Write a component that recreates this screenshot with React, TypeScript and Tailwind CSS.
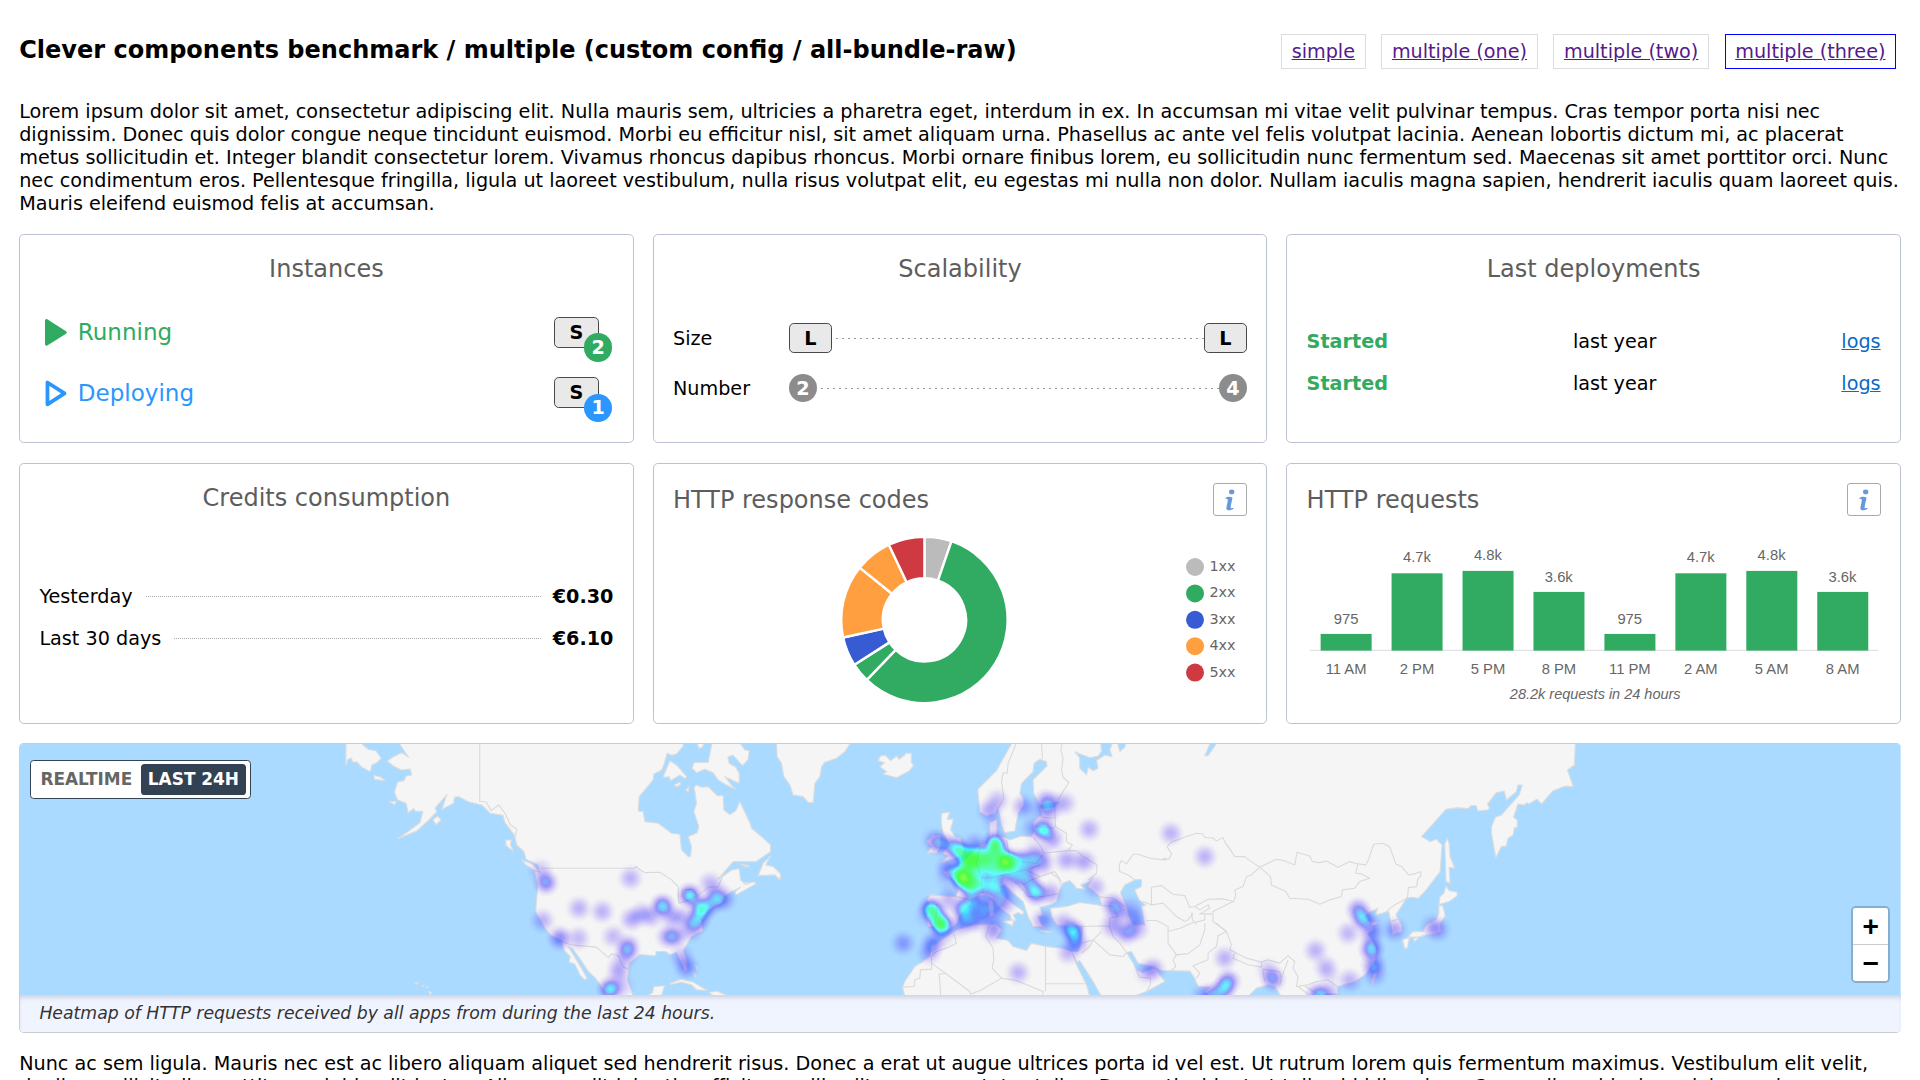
import React from "react";

/* ---------- World map ---------- */

type Frame = { x: number; y: number; sx: number; sy: number };

// Map sheets: each one has its own origin and scale inside the map.
const W: Frame = { x: 0, y: 730, sx: 1 / 2.3758, sy: 1 / 3 };
const A: Frame = { x: 500, y: 730, sx: 1 / 3, sy: 1 / 3 };
const E: Frame = { x: 880, y: 730, sx: 1 / 3, sy: 1 / 3 };
const P: Frame = { x: 1300, y: 730, sx: 1 / 2.529, sy: 1 / 3 };

const pts = (f: Frame, s: string) =>
  s
    .trim()
    .split(/\s+/)
    .map((p) => {
      const [x, y] = p.split(",").map(Number);
      return `${(f.x + x * f.sx).toFixed(1)},${(f.y + y * f.sy).toFixed(1)}`;
    })
    .join(" ");

const americas =
  pts(
    W,
    "948,38 962,66 971,82 955,68 935,80 920,93 935,108 953,120 975,117 978,135 965,138 960,152 945,155 937,187 945,210 965,220 970,248 983,236 987,244 1005,244 998,278 975,300 945,326 990,303 1015,275 1038,245 1034,234 1062,194 1050,238 1078,220 1080,202 1090,200 1115,216 1145,225 1165,250 1195,256 1200,278 1222,315 1228,345 1245,365 1250,388 1278,404 1282,425 1270,422 1278,470 1273,545 1295,595 1310,617 1335,632 1340,660 1355,680 1352,697 1366,703 1378,735 1390,750 1395,745 1380,712 1365,680 1350,650 1360,655 1380,690 1398,725 1415,745 1432,775 1440,800"
  ) +
  " " +
  pts(
    A,
    "400,800 383,750 388,700 420,674 468,678 468,665 498,665 510,675 530,668 540,690 555,724 562,720 560,690 550,662 575,620 608,603 605,570 625,540 665,520 672,500 690,488 722,472 705,486 708,495 768,462 765,456 735,462 722,450 718,416 695,420 655,448 668,432 700,395 768,395 812,365 812,345 785,320 755,295 750,278 720,215 708,242 690,254 672,240 670,197 652,197 625,170 605,172 590,165 583,172 590,220 582,245 597,290 592,308 565,320 575,350 572,380 565,380 545,360 540,313 515,310 475,280 435,275 430,245 415,243 418,200 460,150 462,132 485,120 492,105 502,70 515,76 530,72 550,48 550,38"
  );

const eurasia =
  pts(
    E,
    "397,38 350,122 294,178 300,245 320,258 345,250 355,232 365,285 375,308 405,303 415,250 432,225 430,205 420,190 425,160 460,125 463,100 480,88 500,95 502,108 460,150 462,190 480,225 538,215 525,232 482,236 487,258 475,262 460,278 463,305 455,320 425,318 390,330 375,322 350,318 352,268 330,278 330,320 322,340 300,345 275,370 250,395 240,410 215,420 190,425 205,440 225,450 235,480 228,500 150,495 142,510 150,525 140,560 145,590 165,590 178,608 210,598 232,580 240,555 275,520 270,508 295,500 320,495 340,508 360,535 390,555 400,580 408,570 400,555 415,548 428,555 432,545 390,515 365,490 360,470 375,465 400,490 430,515 445,560 460,590 488,590 475,560 488,556 480,532 515,524 530,515 540,480 548,460 570,452 578,460 590,475 615,478 603,465 625,458 640,442 625,470 660,500 665,527 600,518 560,530 512,535 515,560 530,585 565,588 610,588 605,640 595,665 575,665 545,655 497,650 455,640 440,662 400,650 385,632 350,625 365,600 350,583 335,583 280,585 230,600 205,618 155,650 150,680 125,698 105,710 75,755 68,772 75,800 630,800 620,765 590,705 578,672 592,697 600,692 640,755 665,800 760,800 800,785 855,755 840,735 825,712 790,728 770,722 760,700 740,668 755,665 775,700 820,712 845,722 930,724 945,745 955,770 990,772 975,785 990,800 1105,800 1130,775 1165,765 1185,770 1205,800 1318,800 1345,792 1375,793 1372,770"
  ) +
  " " +
  pts(
    P,
    "95,770 140,755 165,735 190,695 195,665 185,635 172,612 185,600 185,590 198,578 175,575 165,560 175,548 197,535 192,555 225,545 230,575 235,615 258,605 258,585 243,555 270,505 285,502 300,505 320,480 355,425 360,345 345,328 330,335 308,320 370,238 400,233 425,236 435,226 447,228 450,243 475,240 480,235 475,222 497,188 517,183 523,210 548,185 552,165 563,165 555,195 510,255 495,262 485,290 485,310 496,383 510,350 522,348 527,325 540,315 543,293 550,292 550,270 541,262 552,222 568,225 575,218 580,222 600,208 612,222 640,183 672,168 692,170 677,120 695,105 697,38"
  );

const islands: [Frame, string][] = [
  [W, "822,38 822,106 827,88 835,84 838,96 848,96 860,112 880,125 884,104 896,98 906,85 893,62 875,58 862,44 858,38"],
  [W, "1240,390 1265,402 1284,428 1270,422 1250,405"],
  [W, "1202,330 1215,330 1213,345 1220,362 1210,355 1202,345"],
  [W, "1040,258 1048,270 1036,284 1029,270"],
  [W, "925,215 942,214 938,224"],
  [W, "888,136 905,142 915,152 890,148"],
  [W, "985,760 993,758 990,764"],
  [W, "1019,784 1026,789 1021,795"],
  [W, "1003,767 1008,768 1005,770"],
  [W, "1012,770 1018,773 1014,774"],
  [A, "510,92 530,105 560,140 556,146 540,135 512,152 508,140 490,142 500,115"],
  [A, "523,165 540,157 543,163 530,170"],
  [A, "558,180 568,170 566,186"],
  [A, "637,38 625,97 582,98 577,115 590,128 615,118 640,128 655,150 680,165 707,178 690,160 675,140 718,160 718,130 708,112 688,100 684,80 700,76 728,107 745,88 748,62 735,60 720,38"],
  [A, "592,38 597,55 608,52 612,38"],
  [A, "830,38 832,80 845,100 852,140 870,165 880,195 910,200 925,217 940,218 945,160 960,140 965,110 975,97 1010,85 1035,65 1052,38"],
  [A, "812,378 800,400 798,405 820,410 842,432 840,450 825,435 775,437 790,400"],
  [A, "722,402 748,408 740,411"],
  [A, "733,458 748,460 738,464"],
  [A, "1135,92 1142,78 1157,76 1172,92 1190,78 1198,88 1215,75 1218,70 1235,70 1234,95 1241,107 1228,123 1190,143 1150,132 1160,125 1140,110 1155,98"],
  [A, "1326,250 1350,247 1342,268 1361,267 1352,300 1368,322 1382,325 1392,358 1390,375 1365,385 1325,398 1345,378 1328,370 1350,345 1330,310 1324,275"],
  [A, "1300,315 1322,318 1322,350 1310,370 1283,368 1295,350 1282,335"],
  [A, "440,800 458,788 462,770 494,768 484,800"],
  [A, "512,760 545,748 580,757 622,782 590,780 575,765 545,757 512,764"],
  [A, "628,788 650,784 684,798 640,798"],
  [A, "580,728 588,735 586,742"],
  [A, "586,706 594,712 592,720"],
  [E, "325,515 340,512 342,555 330,560"],
  [E, "370,575 402,570 398,588"],
  [E, "482,602 515,605 500,608"],
  [E, "572,608 590,602 580,612"],
  [P, "367,342 373,325 378,342 380,380 392,415 378,412 380,460 370,455"],
  [P, "370,468 378,482 398,487 398,498 378,515 352,524 355,500 365,490"],
  [P, "352,527 362,528 368,558 355,580 358,605 345,612 320,615 300,622 275,622 285,606 312,604 320,585 345,570 352,550"],
  [P, "260,630 278,622 272,655 265,655"],
  [P, "288,626 303,622 290,635"],
  [P, "187,732 195,727 184,762"],
];

const waters: [Frame, string][] = [
  [E, "663,38 665,65 655,78 630,83 585,65 600,85 600,115 620,135 625,112 640,122 655,115 650,92 675,75 697,80 690,60 698,38"],
  [E, "713,38 720,65 735,52 738,38"],
  [E, "992,38 975,77 985,77 1012,38"],
  [E, "765,450 785,448 785,470 765,480 778,510 798,525 785,530 795,585 760,585 748,560 740,530 722,488 735,465"],
  [E, "850,385 860,385 856,390"],
];

const borders: [Frame, string][] = [
  [W, "1140,38 1140,214 1155,216 1167,242 1185,225 1200,250 1213,285 1228,297 1225,320"],
  [A, "122,415 405,415 408,409 418,418 435,428 480,427 515,450 535,470 537,520 570,510 600,492 625,472 655,470 668,440 695,420"],
  [A, "188,636 212,645 290,652 325,683 335,672 355,678 370,712 387,718"],
  [A, "545,502 548,480 575,478 590,492"],
  [E, "410,38 385,100 382,130 370,128 365,155 372,205 355,235"],
  [E, "485,38 488,88"],
  [E, "547,38 543,60 550,85 545,120 550,142 567,157 535,210"],
  [E, "525,235 527,290 560,310 560,335 578,345 565,362 492,370 484,350 460,322"],
  [E, "463,290 525,295"],
  [E, "487,262 525,265"],
  [E, "565,362 590,362 610,380 652,405 650,430 625,450"],
  [E, "765,450 745,435 720,425 718,405 725,392 740,402 760,373 775,373 810,385 850,390 868,387 875,372 862,350 875,337 905,325 950,310 968,312 975,322 1000,325 1010,333 1030,323 1035,335 1065,380 1095,380 1110,392 1125,402 1140,412 1115,435 1100,440 1090,470 1065,480 1068,495 1062,515 1030,507 985,508 945,530 930,532 915,497 880,493 845,467 815,472 815,525 790,515"],
  [E, "1140,412 1165,400 1190,388 1215,393 1245,405 1252,367 1290,378 1298,395 1320,398 1340,393 1375,412 1410,395 1435,402 1428,430 1445,432 1470,445 1440,455 1425,475 1388,480 1385,500 1350,510 1320,523 1285,508 1230,505 1218,485 1175,465 1172,440 1140,412"],
  [P, "148,402 168,405 175,385 187,343 210,340 228,352 243,402 258,410 275,435 290,432 305,425 307,435 298,450 296,470 275,473 273,502 262,512 240,525 215,548"],
  [P, "230,575 248,568"],
  [E, "815,525 850,520 890,560 915,575 925,570 940,550"],
  [E, "945,530 960,540 985,525 990,535 960,552 1000,552 1000,545 1060,515"],
  [E, "800,572 830,572 865,590 865,640 890,675 880,690 888,710 875,722"],
  [E, "865,605 900,595 935,580 975,570 975,555"],
  [E, "935,548 938,570 950,583"],
  [E, "1000,555 1000,575 1040,605 1055,645 1050,660 1100,685 1145,697 1165,690 1200,700 1225,677 1245,695 1240,715 1255,740 1250,770 1285,765"],
  [E, "975,580 975,600 960,645 925,672 885,675"],
  [E, "1010,580 1040,605 1015,618 1010,650 985,670 985,690 940,708 960,730 950,745"],
  [E, "1065,668 1060,685 1105,705 1145,712 1145,697"],
  [E, "1148,718 1155,755"],
  [E, "1148,718 1200,725 1205,745"],
  [E, "1225,690 1205,745 1200,765"],
  [E, "1255,770 1280,790 1290,800"],
  [E, "1285,765 1310,755 1345,750 1372,770"],
  [E, "1275,768 1310,790 1330,800"],
  [E, "222,612 230,640 200,655 170,665 155,680 155,718 122,720 120,745 105,750 103,770 68,772"],
  [E, "155,700 230,755 270,785 275,800"],
  [E, "200,732 178,732 183,800"],
  [E, "275,793 305,780 365,745 410,752 490,785 488,800"],
  [E, "318,620 340,655 342,690 337,715 365,745"],
  [E, "318,620 328,585"],
  [E, "497,650 497,785"],
  [E, "497,762 620,762"],
  [E, "610,590 665,588 690,590 700,620 720,640 740,668"],
  [E, "605,640 640,630 690,675 730,680 740,668"],
  [E, "605,670 630,650 640,630 665,605"],
  [E, "770,722 780,742 812,745 812,765 800,785"],
  [E, "655,500 700,505 735,530"],
  [E, "665,527 700,530 715,560 690,565 690,590"],
  [E, "305,445 350,440 395,430 440,420 480,405"],
  [E, "228,500 270,510"],
  [E, "440,420 480,440 525,425 545,455"],
  [E, "405,455 430,480 445,500 490,500 535,492"],
  [E, "430,465 455,450 480,440"],
  [E, "515,430 535,445 545,468"],
  [E, "152,522 172,525 165,590"],
  [E, "300,350 290,400 305,445 310,490"],
  [E, "380,330 388,375 420,395 470,400 490,375"],
];

/* ---------- Heat points: sheet, x, y, weight ---------- */

const heat: [Frame, number, number, number][] = [
  [A, 138, 458, 0.47], [A, 122, 422, 0.2], [A, 392, 445, 0.27], [A, 237, 535, 0.27],
  [A, 307, 545, 0.27], [A, 128, 572, 0.27], [A, 180, 625, 0.42], [A, 235, 625, 0.24],
  [A, 395, 568, 0.3], [A, 425, 552, 0.27], [A, 340, 620, 0.24], [A, 384, 650, 0.4],
  [A, 380, 672, 0.3], [A, 360, 705, 0.2], [A, 354, 732, 0.24], [A, 330, 778, 0.6],
  [A, 365, 770, 0.2], [A, 488, 528, 0.58], [A, 455, 560, 0.26], [A, 515, 560, 0.3],
  [A, 550, 565, 0.25], [A, 570, 497, 0.62], [A, 602, 535, 0.55], [A, 605, 555, 0.2],
  [A, 590, 575, 0.48], [A, 622, 530, 0.3], [A, 645, 510, 0.42], [A, 672, 508, 0.33],
  [A, 630, 460, 0.24], [A, 650, 485, 0.2], [A, 505, 620, 0.35], [A, 528, 620, 0.33],
  [A, 572, 600, 0.28], [A, 560, 712, 0.36], [A, 545, 682, 0.25], [A, 1210, 640, 0.3],
  [E, 240, 365, 0.6], [E, 222, 350, 0.4], [E, 265, 378, 0.5], [E, 175, 338, 0.36],
  [E, 160, 330, 0.18], [E, 195, 345, 0.2], [E, 205, 415, 0.34], [E, 200, 440, 0.12],
  [E, 285, 385, 0.62], [E, 262, 400, 0.6], [E, 280, 405, 0.4], [E, 235, 430, 0.5],
  [E, 248, 442, 0.8], [E, 255, 455, 0.55], [E, 265, 430, 0.4], [E, 272, 472, 0.62],
  [E, 300, 462, 0.5], [E, 290, 440, 0.4], [E, 345, 338, 0.7], [E, 348, 362, 0.55],
  [E, 325, 385, 0.66], [E, 305, 370, 0.4], [E, 375, 393, 0.8], [E, 388, 400, 0.55],
  [E, 412, 392, 0.5], [E, 355, 405, 0.45], [E, 365, 370, 0.3], [E, 448, 390, 0.44],
  [E, 480, 380, 0.25], [E, 465, 360, 0.14], [E, 310, 412, 0.55], [E, 340, 425, 0.48],
  [E, 380, 425, 0.42], [E, 420, 425, 0.34], [E, 450, 420, 0.2], [E, 345, 460, 0.5],
  [E, 365, 488, 0.44], [E, 325, 480, 0.36], [E, 252, 535, 0.55], [E, 255, 555, 0.2],
  [E, 278, 512, 0.42], [E, 265, 575, 0.34], [E, 305, 535, 0.36], [E, 340, 525, 0.32],
  [E, 365, 530, 0.24], [E, 385, 510, 0.18], [E, 295, 570, 0.28], [E, 325, 555, 0.2],
  [E, 285, 345, 0.28], [E, 155, 536, 0.66], [E, 168, 560, 0.55], [E, 182, 582, 0.74],
  [E, 192, 592, 0.35], [E, 140, 555, 0.15], [E, 205, 520, 0.18], [E, 210, 495, 0.14],
  [E, 160, 640, 0.37], [E, 148, 668, 0.28], [E, 190, 620, 0.14], [E, 235, 588, 0.22],
  [E, 340, 605, 0.32], [E, 345, 575, 0.2], [E, 415, 728, 0.27], [E, 565, 668, 0.26],
  [E, 580, 603, 0.56], [E, 553, 580, 0.28], [E, 592, 640, 0.34], [E, 580, 625, 0.15],
  [E, 490, 572, 0.34], [E, 470, 490, 0.54], [E, 455, 470, 0.38], [E, 512, 490, 0.3],
  [E, 440, 445, 0.32], [E, 405, 448, 0.32], [E, 492, 300, 0.64], [E, 517, 328, 0.32],
  [E, 460, 295, 0.24], [E, 500, 215, 0.4], [E, 505, 245, 0.28], [E, 525, 222, 0.18],
  [E, 480, 240, 0.14], [E, 555, 220, 0.24], [E, 352, 212, 0.24], [E, 328, 242, 0.3],
  [E, 345, 280, 0.14], [E, 430, 230, 0.3], [E, 628, 298, 0.27], [E, 558, 390, 0.28],
  [E, 615, 395, 0.28], [E, 590, 392, 0.1], [E, 488, 402, 0.3], [E, 645, 472, 0.25],
  [E, 700, 525, 0.42], [E, 722, 545, 0.26], [E, 765, 565, 0.3], [E, 755, 535, 0.18],
  [E, 742, 608, 0.4], [E, 772, 598, 0.26], [E, 695, 590, 0.24], [E, 715, 600, 0.12],
  [E, 705, 565, 0.15], [E, 873, 310, 0.27], [E, 975, 380, 0.27], [E, 820, 718, 0.32],
  [E, 798, 728, 0.18], [E, 1035, 685, 0.27], [E, 1045, 755, 0.48], [E, 1030, 780, 0.48],
  [E, 1000, 795, 0.4], [E, 970, 798, 0.24], [E, 1180, 748, 0.42], [E, 1165, 722, 0.2],
  [E, 1315, 795, 0.5], [E, 1345, 792, 0.3], [E, 1338, 712, 0.26], [E, 1350, 740, 0.1],
  [E, 1307, 662, 0.27], [E, 1405, 610, 0.25], [E, 1435, 540, 0.42], [E, 1450, 568, 0.52],
  [E, 1475, 588, 0.24], [E, 1410, 752, 0.26], [E, 1475, 658, 0.58], [E, 1475, 615, 0.32],
  [E, 1482, 705, 0.42], [E, 1485, 735, 0.26], [P, 240, 600, 0.33], [P, 335, 590, 0.24],
  [P, 350, 600, 0.28],
];

function WorldMap() {
  return (
    <svg className="block h-full w-full" viewBox="20 744 1881 251.6" preserveAspectRatio="none">
      <defs>
        <radialGradient id="heat-dot">
          <stop offset="0" stopColor="#000" stopOpacity="1" />
          <stop offset="0.25" stopColor="#000" stopOpacity="0.88" />
          <stop offset="0.5" stopColor="#000" stopOpacity="0.54" />
          <stop offset="0.75" stopColor="#000" stopOpacity="0.18" />
          <stop offset="1" stopColor="#000" stopOpacity="0" />
        </radialGradient>
        <filter id="heat-limit" filterUnits="userSpaceOnUse" x="20" y="700" width="1881" height="340" colorInterpolationFilters="sRGB">
          <feComponentTransfer>
            <feFuncA type="table" tableValues="0 0.1 0.2 0.3 0.4 0.5 0.59 0.64 0.68 0.71 0.79" />
          </feComponentTransfer>
        </filter>
        <filter id="heat-ramp" filterUnits="userSpaceOnUse" x="20" y="700" width="1881" height="340" colorInterpolationFilters="sRGB">
          <feColorMatrix type="matrix" values="0 0 0 1 0  0 0 0 1 0  0 0 0 1 0  0 0 0 1 0" />
          <feComponentTransfer>
            <feFuncR type="table" tableValues="0.2 0.2 0.2 0.1 0 0 0 0 1 1 1" />
            <feFuncG type="table" tableValues="0 0 0 0 0 0.5 1 1 1 0.5 0" />
            <feFuncB type="table" tableValues="1 1 1 1 1 1 1 0 0 0 0" />
          </feComponentTransfer>
        </filter>
      </defs>
      <rect x="20" y="740" width="1881" height="260" fill="#aadaff" />
      <g fill="#f5f5f5" stroke="#dddddd" strokeWidth="1.1" strokeLinejoin="round">
        <polygon points={americas} />
        <polygon points={eurasia} />
        {islands.map(([f, s], i) => (
          <polygon key={i} points={pts(f, s)} />
        ))}
      </g>
      <g fill="#aadaff" stroke="#dddddd" strokeWidth="1.1" strokeLinejoin="round">
        {waters.map(([f, s], i) => (
          <polygon key={i} points={pts(f, s)} />
        ))}
      </g>
      <g fill="none" stroke="#dadada" strokeWidth="1.1" strokeLinejoin="round">
        {borders.map(([f, s], i) => (
          <polyline key={i} points={pts(f, s)} />
        ))}
      </g>
      <g filter="url(#heat-ramp)">
        <g filter="url(#heat-limit)">
          {heat.map(([f, x, y, w], i) => (
            <circle key={i} cx={f.x + x * f.sx} cy={f.y + y * f.sy} r="14.5" fill="url(#heat-dot)" opacity={w} />
          ))}
        </g>
      </g>
    </svg>
  );
}

/* ---------- Charts ---------- */

const slices: [number, number, string][] = [
  [0, 19, "#bbbbbb"],
  [19, 223.8, "#30ab61"],
  [223.8, 237.3, "#30ab61"],
  [237.3, 257.8, "#365bd3"],
  [257.8, 308.9, "#ff9f40"],
  [308.9, 334.7, "#ff9f40"],
  [334.7, 360, "#cf3942"],
];

const legend: [string, string][] = [
  ["1xx", "#bbbbbb"],
  ["2xx", "#30ab61"],
  ["3xx", "#365bd3"],
  ["4xx", "#ff9f40"],
  ["5xx", "#cf3942"],
];

function slicePath(from: number, to: number) {
  const cx = 251.4, cy = 103.9, R = 83.2, r = 41.6;
  const at = (deg: number, rad: number) => {
    const a = ((deg - 90) * Math.PI) / 180;
    return `${(cx + rad * Math.cos(a)).toFixed(2)} ${(cy + rad * Math.sin(a)).toFixed(2)}`;
  };
  const big = to - from > 180 ? 1 : 0;
  return `M${at(from, R)}A${R} ${R} 0 ${big} 1 ${at(to, R)}L${at(to, r)}A${r} ${r} 0 ${big} 0 ${at(from, r)}Z`;
}

function Donut() {
  return (
    <svg className="block h-full w-full" viewBox="0 0 574 186.8">
      {slices.map(([a, b, c], i) => (
        <path key={i} d={slicePath(a, b)} fill={c} stroke="#fff" strokeWidth="2.4" strokeLinejoin="bevel" />
      ))}
      {legend.map(([label, c], i) => (
        <g key={label}>
          <circle cx="522" cy={51 + i * 26.4} r="9" fill={c} />
          <text x="536.4" y={55 + i * 26.4} fontSize="14.4" fill="#666" fontFamily="DejaVu Sans, sans-serif">
            {label}
          </text>
        </g>
      ))}
    </svg>
  );
}

const bars: [string, string, number, number][] = [
  ["11 AM", "975", 117.9, 107.8],
  ["2 PM", "4.7k", 57.3, 46.4],
  ["5 PM", "4.8k", 54.9, 44.4],
  ["8 PM", "3.6k", 75.9, 65.8],
  ["11 PM", "975", 117.9, 107.8],
  ["2 AM", "4.7k", 57.3, 46.4],
  ["5 AM", "4.8k", 54.9, 44.4],
  ["8 AM", "3.6k", 75.9, 65.8],
];

function Bars() {
  return (
    <svg
      className="block h-full w-full"
      viewBox="0 0 574 186.8"
      fontFamily="Liberation Sans, Arial, sans-serif"
      fontSize="14.8"
      fill="#666"
      textAnchor="middle"
    >
      <path d="M2.8 134.3H571.2" stroke="#e2e2e2" strokeWidth="1.2" />
      {bars.map(([time, value, top, label], i) => (
        <g key={i}>
          <rect x={13.6 + i * 70.95} y={top} width="51" height={134.6 - top} fill="#30ab61" />
          <text x={39 + i * 70.93} y={label}>{value}</text>
          <text x={39.1 + i * 70.93} y="157.8">{time}</text>
        </g>
      ))}
      <text x="288.2" y="182.7" fontSize="14.5" fontStyle="italic">28.2k requests in 24 hours</text>
    </svg>
  );
}

/* ---------- Pieces ---------- */

const Title = ({ children }: { children: React.ReactNode }) => (
  <div className="text-center text-[20px] text-[#5d5d5d]">{children}</div>
);

const Card = ({ children }: { children: React.ReactNode }) => (
  <section className="flex flex-col rounded-[4px] border border-[#bcc2d1] bg-white p-4">{children}</section>
);

const Size = ({ children }: { children: string }) => (
  <span className="flex h-[25.6px] items-center justify-center rounded-[4px] border border-[#484848] bg-[#e9e9e9] font-bold">
    {children}
  </span>
);

const InfoButton = () => (
  <span className="block h-[27.5px] w-7 rounded-[2.5px] border border-[#aaa] bg-white">
    <svg className="-ml-px -mt-px block h-[27.5px] w-7" viewBox="0 0 34 33" fill="#6699d9">
      <ellipse cx="18.9" cy="8.8" rx="2.7" ry="2.4" />
      <path d="M12.4 14.9c2-1.3 5.4-1.7 6.9-.7.6.4.2 2-.1 3.3-.5 2.6-1.5 6.2-1.3 7.3.1.7 1.4.5 2.8.4l.1.7c-1.4 1-3.1 1.5-4.7 1.5-1.7 0-2.8-.9-2.5-2.7.4-2.5 1.3-5.4 1.4-7.6 0-1-.8-1.3-2.4-1.4z" />
    </svg>
  </span>
);

const Instance = ({ label, count, tone, badge, hollow }: { label: string; count: string; tone: string; badge: string; hollow?: boolean }) => (
  <div className={`flex h-[50.4px] items-start ${tone}`}>
    <svg className="ml-1 mt-[1.9px] h-6 w-[20px]" viewBox="0 0 24 29">
      <path
        d={hollow ? "M3.4 3.5V25.5L20.6 14.5Z" : "M2.4 2.6V26.4L21.3 14.5Z"}
        fill={hollow ? "none" : "currentColor"}
        stroke="currentColor"
        strokeWidth={hollow ? 3.8 : 3}
        strokeLinejoin="round"
      />
    </svg>
    <span className="ml-2 mt-[3px] flex-1 text-[19.2px]">{label}</span>
    <span className="relative mr-3 mt-[1px] w-[37.5px] text-black">
      <Size>S</Size>
      <span className={`absolute -right-[11px] top-[13.4px] flex h-6 w-[23.5px] items-center justify-center rounded-full font-bold text-white ${badge}`}>
        {count}
      </span>
    </span>
  </div>
);

const Dots = () => (
  <span className="h-[0.8px] flex-1 bg-[repeating-linear-gradient(90deg,transparent_0_3px,#999_3px_5px)]" />
);

const Disc = ({ children }: { children: string }) => (
  <span className="flex h-[23.5px] w-[23.5px] items-center justify-center rounded-full bg-[#8c8c8c] font-bold text-white">
    {children}
  </span>
);

const NavLink = ({ children, active }: { children: string; active?: boolean }) => (
  <a className={`border px-2 py-1 text-[#551a8b] underline ${active ? "border-[#0000ff]" : "border-[#dddddd]"}`}>{children}</a>
);

export default function App() {
  return (
    <div className="h-[900px] w-[1600px] overflow-hidden bg-white px-4 font-['DejaVu_Sans',sans-serif] text-[16px] leading-[normal] text-black [zoom:1.2]">
      <header className="flex items-baseline justify-between pt-[28.67px]">
        <h1 className="text-[20px] font-bold">Clever components benchmark / multiple (custom config / all-bundle-raw)</h1>
        <nav className="mr-1 flex gap-[13.1px]">
          <NavLink>simple</NavLink>
          <NavLink>multiple (one)</NavLink>
          <NavLink>multiple (two)</NavLink>
          <NavLink active>multiple (three)</NavLink>
        </nav>
      </header>

      <p className="mt-[26px] text-[16.01px]">
        Lorem ipsum dolor sit amet, consectetur adipiscing elit. Nulla mauris sem, ultricies a pharetra eget, interdum in ex. In accumsan mi vitae velit pulvinar tempus. Cras tempor porta nisi nec dignissim. Donec quis dolor congue neque tincidunt euismod. Morbi eu efficitur nisl, sit amet aliquam urna. Phasellus ac ante vel felis volutpat lacinia. Aenean lobortis dictum mi, ac placerat metus sollicitudin et. Integer blandit consectetur lorem. Vivamus rhoncus dapibus rhoncus. Morbi ornare finibus lorem, eu sollicitudin nunc fermentum sed. Maecenas sit amet porttitor orci. Nunc nec condimentum eros. Pellentesque fringilla, ligula ut laoreet vestibulum, nulla risus volutpat elit, eu egestas mi nulla non dolor. Nullam iaculis magna sapien, hendrerit iaculis quam laoreet quis. Mauris eleifend euismod felis at accumsan.
      </p>

      <main className="mt-4 grid grid-cols-3 grid-rows-[174.2px_217.67px_241.67px] gap-4">
        <Card>
          <Title>Instances</Title>
          <div className="mt-[27.7px]">
            <Instance label="Running" count="2" tone="text-[#30ab61]" badge="bg-[#30ab61]" />
            <Instance label="Deploying" count="1" tone="text-[#2b96fd]" badge="bg-[#2b96fd]" hollow />
          </div>
        </Card>

        <Card>
          <Title>Scalability</Title>
          <div className="mt-[33.5px] grid grid-cols-[96.5px_1fr] items-center gap-y-[17.3px]">
            <span>Size</span>
            <div className="flex items-center">
              <div className="w-9"><Size>L</Size></div>
              <Dots />
              <div className="w-9"><Size>L</Size></div>
            </div>
            <span>Number</span>
            <div className="flex items-center">
              <Disc>2</Disc>
              <Dots />
              <Disc>4</Disc>
            </div>
          </div>
        </Card>

        <Card>
          <Title>Last deployments</Title>
          <div className="mt-[39.4px] flex flex-col gap-4">
            {[0, 1].map((i) => (
              <div key={i} className="flex justify-between">
                <span className="font-bold text-[#30ab61]">Started</span>
                <span>last year</span>
                <a className="text-[#0b69c7] underline">logs</a>
              </div>
            ))}
          </div>
        </Card>

        <Card>
          <div className="pt-[0.7px]"><Title>Credits consumption</Title></div>
          <div className="flex flex-1 flex-col justify-center gap-4 pt-4">
            {[["Yesterday", "€0.30"], ["Last 30 days", "€6.10"]].map(([label, value]) => (
              <div key={label} className="flex items-center">
                <span>{label}</span>
                <span className="ml-[11px] mr-2.5 flex-1 border-t border-dotted border-[#aaa]" />
                <span className="font-bold">{value}</span>
              </div>
            ))}
          </div>
        </Card>

        <Card>
          <div className="flex h-[27.5px] items-center justify-between">
            <div className="pt-[1.4px]"><Title>HTTP response codes</Title></div>
            <InfoButton />
          </div>
          <div className="h-[155.67px]"><Donut /></div>
        </Card>

        <Card>
          <div className="flex h-[27.5px] items-center justify-between">
            <div className="pt-[1.4px]"><Title>HTTP requests</Title></div>
            <InfoButton />
          </div>
          <div className="h-[155.67px]"><Bars /></div>
        </Card>

        <section className="relative col-span-3 flex flex-col overflow-hidden rounded-[4px] border border-r-0 border-[#ccc]">
          <div className="min-h-0 flex-1">
            <WorldMap />
          </div>
          <div className="flex h-[30.5px] items-center bg-[#f0f4ff] px-4 pb-[0.8px] text-[14.4px] italic text-[#333] shadow-[inset_0_4px_4px_-2px_#cbd0df]">
            Heatmap of HTTP requests received by all apps from during the last 24 hours.
          </div>
          <div className="absolute left-[8.5px] top-[13.5px] flex h-8 items-center rounded-[3px] border border-[#334455] bg-white text-[14.1px] font-bold text-[#666]">
            <span className="w-[91.3px] pl-[7.5px]">REALTIME</span>
            <span className="mr-[3px] flex h-[26px] w-[87.5px] items-center justify-center rounded-[3px] bg-[#334252] text-white">LAST 24H</span>
          </div>
          <div className="absolute bottom-[41px] right-[9.2px] w-8 rounded-[4px] border-2 border-black/20 bg-clip-padding font-['DejaVu_Sans_Mono',monospace] text-[22px] font-bold">
            <div className="flex h-[30.5px] items-center justify-center rounded-t-[2px] border-b border-[#ccc] bg-white leading-none">+</div>
            <div className="flex h-[30px] items-center justify-center rounded-b-[2px] bg-white leading-none">−</div>
          </div>
        </section>
      </main>

      <p className="mt-4 text-[16.01px]">
        Nunc ac sem ligula. Mauris nec est ac libero aliquam aliquet sed hendrerit risus. Donec a erat ut augue ultrices porta id vel est. Ut rutrum lorem quis fermentum maximus. Vestibulum elit velit, dapibus sollicitudin porttitor sed, blandit lectus. Aliquam velit lobortis, efficitur mollis elit eu, consectetur tellus. Donec tincidunt at tellus id bibendum. Cras nulla vehicula, pulvinar enim nec, tristique nisl dictum at.
      </p>
    </div>
  );
}
